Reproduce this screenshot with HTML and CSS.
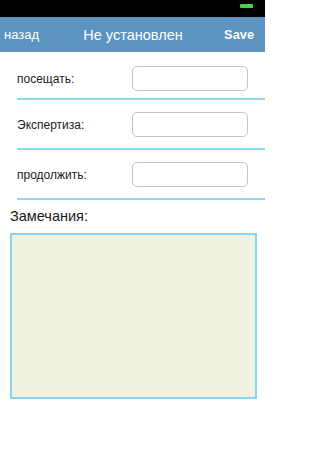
FILE: index.html
```html
<!DOCTYPE html>
<html>
<head>
<meta charset="utf-8">
<link rel="stylesheet" href="styles.css">
</head>
<body>
<div class="page">
  <div class="status"><span class="battery"></span></div>
  <div class="nav">
    <span class="back">назад</span>
    <span class="title">Не установлен</span>
    <span class="save">Save</span>
  </div>
  <div class="form">
    <div class="row first"><span class="label">посещать:</span><span class="input"></span></div>
    <div class="row"><span class="label">Экспертиза:</span><span class="input"></span></div>
    <div class="row"><span class="label">продолжить:</span><span class="input"></span></div>
  </div>
  <div class="notes">
    <div class="notes-title">Замечания:</div>
    <div class="notes-box"></div>
  </div>
</div>
</body>
</html>
```
FILE: styles.css
```css
html, body {
  margin: 0;
  padding: 0;
  background: #ffffff;
  font-family: "Liberation Sans", Arial, sans-serif;
}
.page {
  width: 265px;
  height: 471px;
  overflow: hidden;
}
.status {
  height: 17px;
  background: #000000;
  display: flex;
  justify-content: flex-end;
  align-items: flex-start;
  padding-right: 12px;
}
.battery {
  width: 13px;
  height: 4px;
  margin-top: 4px;
  background: #3fd452;
  border-radius: 1px;
}
.nav {
  height: 35px;
  background: #5b93c1;
  display: grid;
  grid-template-columns: 1fr auto 1fr;
  align-items: center;
  color: #ffffff;
  padding: 0 11px 0 4px;
}
.back {
  font-size: 13px;
  justify-self: start;
}
.title {
  font-size: 14.5px;
  padding-left: 8px;
}
.save {
  font-size: 12.8px;
  font-weight: bold;
  justify-self: end;
}
.form {
  display: flex;
  flex-direction: column;
}
.row {
  margin-left: 17px;
  height: 50px;
  box-sizing: border-box;
  padding: 12px 17px 11px 0;
  border-bottom: 2px solid #8fd8ea;
  display: flex;
  align-items: center;
  justify-content: space-between;
}
.row.first {
  height: 48px;
  padding-top: 14px;
  padding-bottom: 7px;
}
.label {
  font-size: 12px;
  color: #222222;
}
.input {
  width: 114px;
  height: 23px;
  border: 1px solid #c4c4c4;
  border-radius: 5px;
  background: #ffffff;
}
.notes {
  padding: 8px 8px 0 10px;
}
.notes-title {
  font-size: 14.5px;
  color: #1a1a1a;
  height: 25px;
}
.notes-box {
  height: 162px;
  border: 2px solid #86d7ea;
  background: #f1f1e1;
}
```
